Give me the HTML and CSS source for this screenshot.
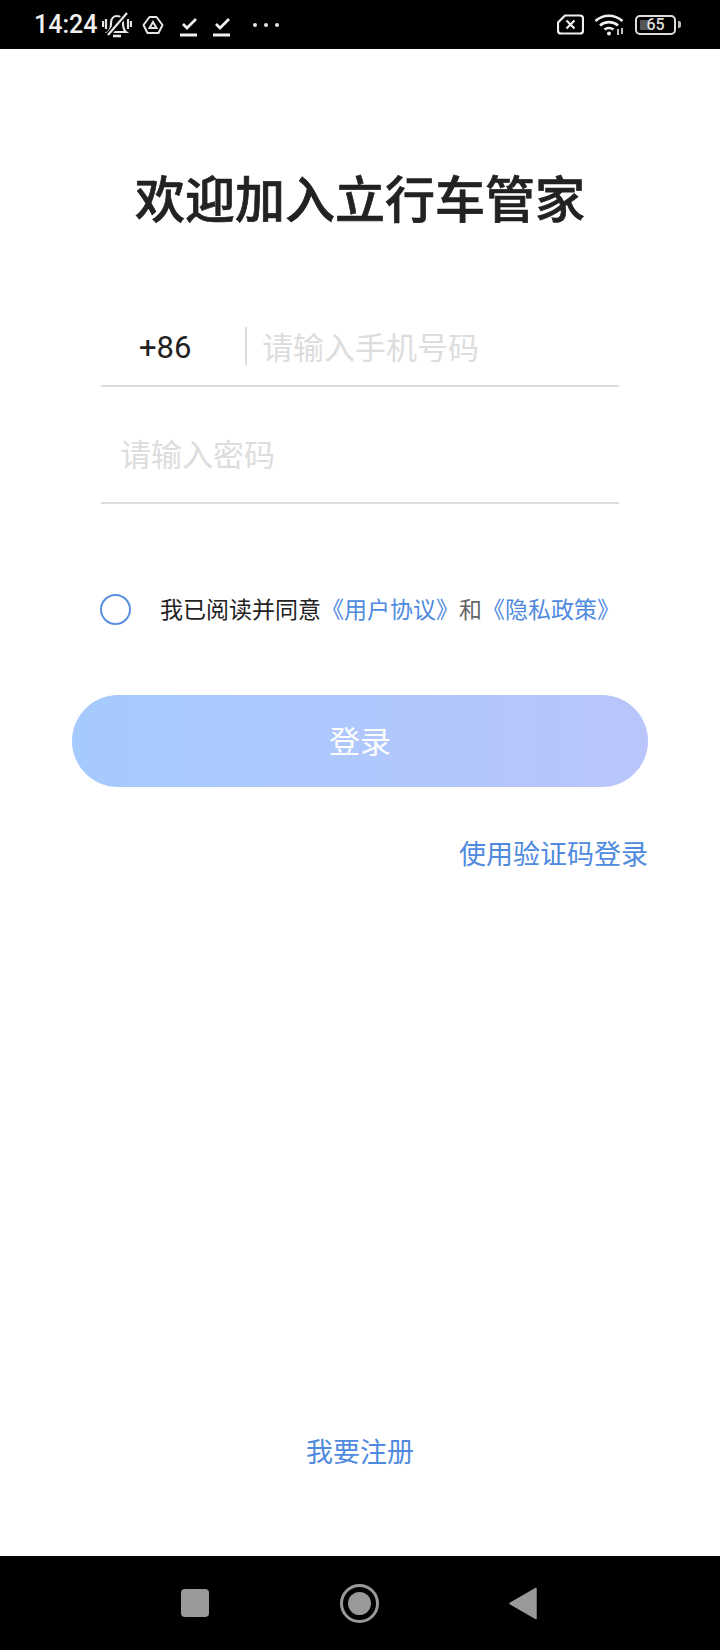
FILE: index.html
```html
<html>
<head>
  <meta charset="utf-8">
  <title>立行车管家</title>
  <link rel="stylesheet" href="styles.css">
</head>

<body>
  <div class="app">
    <div class="status">
      <span class="time">14:24</span>
      <svg class="ic-bell" width="30" height="26" viewBox="0 0 30 26" fill="none" stroke="#e6e6e6" stroke-width="2.200">
        <path d="M6 20c2.500-2 3-5 3-9 0-4 2.500-7 6-7s6 3 6 7c0 4 .500 7 3 9z" />
        <path d="M11 24h8" stroke-width="2.600" />
        <path d="M1 9v6M4 7v10M26 7v10M29 9v6" />
        <path d="M25 1 6 23" stroke="#000" stroke-width="5" />
        <path d="M25 1 6 23" />
      </svg>
      <svg class="ic-drive" width="22" height="20" viewBox="0 0 22 20" fill="none" stroke="#e6e6e6" stroke-width="2">
        <path d="M7.500 2h7l6 8-4 8h-11l-4-8z" stroke-linejoin="round" />
        <path d="M11 7l3.500 6h-7z" />
      </svg>
      <svg class="ic-check" width="18" height="20" viewBox="0 0 18 20" fill="none" stroke="#f0f0f0">
        <path d="M3 7l4 4 9-9" stroke-width="2.800" />
        <path d="M0 18h17" stroke-width="3" />
      </svg>
      <svg class="ic-check" width="18" height="20" viewBox="0 0 18 20" fill="none" stroke="#f0f0f0">
        <path d="M3 7l4 4 9-9" stroke-width="2.800" />
        <path d="M0 18h17" stroke-width="3" />
      </svg>
      <div class="dots"><i></i><i></i><i></i></div>

      <div class="status-right">
        <svg width="27" height="21" viewBox="0 0 27 21" fill="none" stroke="#f0f0f0" stroke-width="2.200">
          <path d="M8 1.500h15a3 3 0 0 1 3 3v12a3 3 0 0 1-3 3H4a3 3 0 0 1-3-3V8.500z" stroke-linejoin="round" />
          <path d="M9.500 6.500l8 8M17.500 6.500l-8 8" />
        </svg>
        <svg width="31" height="23" viewBox="0 0 31 23" fill="none" stroke="#f0f0f0" stroke-width="2.600">
          <path d="M1.500 8c7.500-7 19-7 27 0" />
          <path d="M6 12.500c5-4.500 13-4.500 18 0" />
          <path d="M10.500 16.500c2.500-2 6.500-2 9 0" />
          <circle cx="15" cy="20.500" r="2" fill="#f0f0f0" stroke="none" />
          <path d="M24 16v6M28 15v6" stroke-width="1.600" />
        </svg>
        <div class="battery">
          <div class="battery-body">
            <div class="battery-level"></div>
            <span class="battery-num">65</span>
          </div>
          <div class="battery-nub"></div>
        </div>
      </div>
    </div>

    <div class="main">
      <h1 class="title">欢迎加入立行车管家</h1>

      <div class="field field-phone">
        <span class="code">+86</span>
        <span class="divider"></span>
        <span class="hint">请输入手机号码</span>
      </div>
      <div class="field field-pass">
        <span class="hint">请输入密码</span>
      </div>

      <div class="agree">
        <span class="radio"></span>
        <span class="agree-text">我已阅读并同意<a class="link">《用户协议》</a><span class="gray">和</span><a class="link">《隐私政策》</a></span>
      </div>

      <div class="login-btn">登录</div>
      <div class="code-login"><a class="link">使用验证码登录</a></div>

      <div class="register"><a class="link">我要注册</a></div>
    </div>

    <div class="navbar">
      <div class="nav-square"></div>
      <div class="nav-home"><div></div></div>
      <svg width="28" height="33" viewBox="0 0 28 33">
        <path d="M27 1.500v30L1 16.500z" fill="#999" stroke="#999" stroke-width="1.500" stroke-linejoin="round" />
      </svg>
    </div>
  </div>
</body>

</html>
```

FILE: styles.css
```css
* {
  box-sizing: border-box;
}

body {
  margin: 0;
  background: #fff;
  font-family: "Noto Sans CJK SC", "Noto Sans", sans-serif;
}

.app {
  display: flex;
  flex-direction: column;
  width: 720px;
  height: 1650px;
}

.status {
  display: flex;
  align-items: center;
  height: 49px;
  padding: 0 39px 0 34px;
  background: #000;
  color: #f0f0f0;
}

.time {
  font-family: Roboto, sans-serif;
  font-size: 25px;
  font-weight: 500;
  margin-right: 5px;
}

.ic-drive {
  margin-left: 10px;
}

.ic-check {
  margin: 4px 0 0 16px;
}

.ic-check + .ic-check {
  margin-left: 15px;
}

.dots {
  display: flex;
  gap: 7px;
  margin-left: 22px;
}

.dots i {
  width: 4px;
  height: 4px;
  border-radius: 50%;
  background: #e6e6e6;
}

.status-right {
  display: flex;
  align-items: center;
  gap: 10px;
  margin-left: auto;
}

.battery {
  display: flex;
  align-items: center;
  gap: 2px;
}

.battery-body {
  position: relative;
  display: flex;
  align-items: center;
  justify-content: center;
  width: 41px;
  height: 20px;
  border: 2px solid #ddd;
  border-radius: 5px;
}

.battery-level {
  position: absolute;
  left: 3px;
  top: 3px;
  bottom: 3px;
  width: 9px;
  border-radius: 1px;
  background: #555;
}

.battery-num {
  position: relative;
  font-family: Roboto, sans-serif;
  font-size: 16px;
  font-weight: 500;
  color: #ddd;
}

.battery-nub {
  width: 3px;
  height: 7px;
  border-radius: 0 2px 2px 0;
  background: #bbb;
}

.main {
  flex: 1;
  display: flex;
  flex-direction: column;
  padding: 0 72px;
}

.title {
  margin: 116px 0 0;
  font-size: 50px;
  line-height: 62px;
  font-weight: 500;
  -webkit-text-stroke: 0.7px #222;
  text-align: center;
  color: #222;
}

.field {
  display: flex;
  align-items: center;
  margin-left: 29px;
  margin-right: 29px;
  border-bottom: 2px solid #ddd;
}

.field-phone {
  height: 77px;
  margin-top: 83px;
  padding-bottom: 4px;
}

.field-pass {
  height: 117px;
  padding: 16px 0 0 19px;
}

.code {
  width: 144px;
  margin-top: 4px;
  padding-left: 38px;
  font-family: Roboto, sans-serif;
  font-size: 31px;
  color: #222;
}

.divider {
  width: 2px;
  height: 38px;
  margin-right: 15px;
  background: #ddd;
}

.hint {
  font-size: 31px;
  color: #ddd;
}

.agree {
  display: flex;
  align-items: center;
  margin: 88px 0 0 28px;
}

.radio {
  width: 31px;
  height: 31px;
  margin-top: 2px;
  border: 2px solid #5a90e0;
  border-radius: 50%;
}

.agree-text {
  margin-left: 29px;
  font-size: 23px;
  line-height: 33px;
  color: #222;
}

.link {
  color: #4f8adf;
}

.gray {
  color: #666;
}

.login-btn {
  height: 92px;
  margin-top: 70px;
  border-radius: 46px;
  background: linear-gradient(to right, #a5cafe, #b9c5fb);
  font-size: 31px;
  line-height: 90px;
  text-align: center;
  color: #fff;
}

.code-login {
  margin-top: 46px;
  font-size: 27px;
  line-height: 40px;
  text-align: right;
}

.register {
  margin-top: auto;
  margin-bottom: 85px;
  font-size: 27px;
  line-height: 40px;
  text-align: center;
}

.navbar {
  display: flex;
  align-items: center;
  justify-content: space-between;
  height: 94px;
  padding: 0 183px 0 181px;
  background: #000;
}

.nav-square {
  width: 28px;
  height: 28px;
  border-radius: 4px;
  background: #999;
}

.nav-home {
  display: flex;
  align-items: center;
  justify-content: center;
  width: 39px;
  height: 39px;
  border: 3px solid #999;
  border-radius: 50%;
}

.nav-home div {
  width: 23px;
  height: 23px;
  border-radius: 50%;
  background: #999;
}
```
